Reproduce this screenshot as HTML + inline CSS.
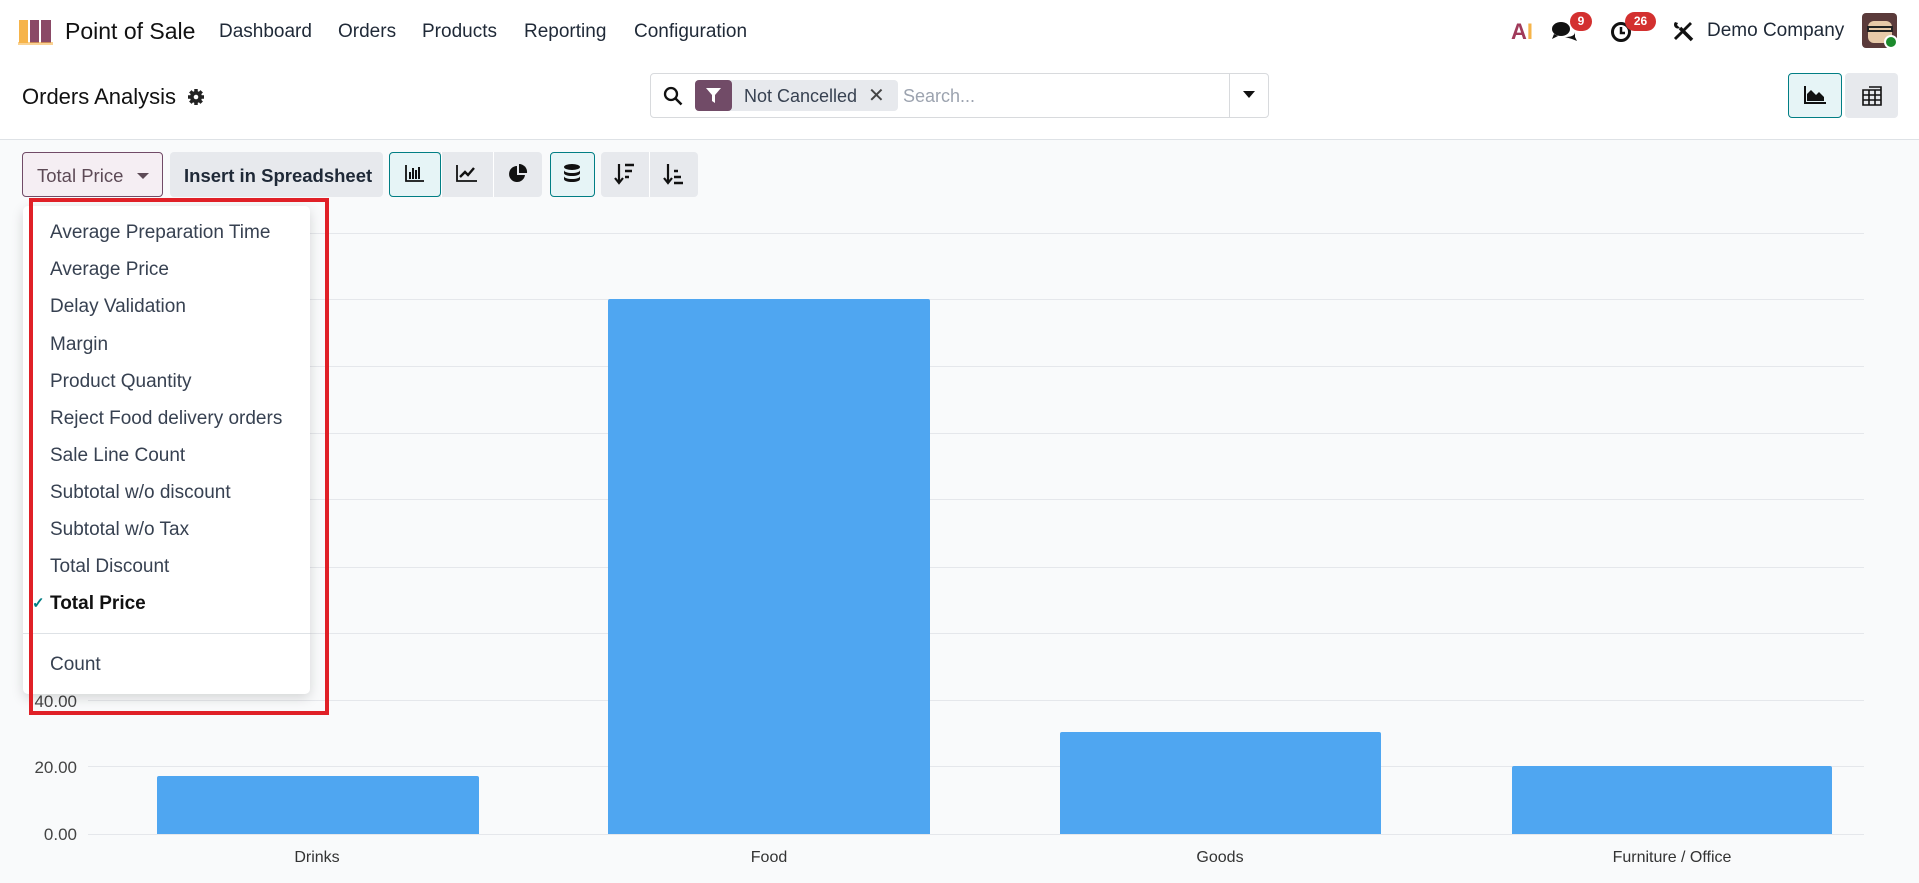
<!DOCTYPE html>
<html><head><meta charset="utf-8"><style>
*{box-sizing:border-box;margin:0;padding:0}
body{width:1919px;height:883px;overflow:hidden;background:#f9fafb;font-family:"Liberation Sans",Arial,sans-serif;color:#1f2937;position:relative}
.a{position:absolute}
.top{left:0;top:0;width:1919px;height:140px;background:#fff;border-bottom:1px solid #dee2e6}
.nav{top:21px;font-size:19px;color:#1f2937}
.btn{position:absolute;top:152px;height:45px;background:#e7e9ed;border-radius:4px}
.item{position:absolute;left:50px;font-size:19px;color:#374151}
.grid{position:absolute;left:88px;width:1776px;height:1px;background:#e5e7eb}
.bar{position:absolute;background:#4fa6f1;border-radius:2px 2px 0 0}
.yl{position:absolute;right:1842px;font-size:16px;color:#444}
.xl{position:absolute;top:849px;font-size:16px;color:#333;transform:translateX(-50%)}
.badge{position:absolute;background:#d3302f;color:#fff;font-size:12px;font-weight:bold;border-radius:10px;text-align:center;height:19px;line-height:19px}
</style></head><body>
<div class="a top"></div>
<svg class="a" style="left:17px;top:18px" width="37" height="27" viewBox="0 0 37 27"><path d="M2 2h9v23H2z" fill="#f6b44a"/><path d="M13 2h9v23h-9z" fill="#8a4966"/><path d="M24 2h10v23H24z" fill="#8a4966"/><path d="M1 24h35v3H1z" fill="#f6b44a" opacity=".6"/></svg>
<div class="a" style="left:65px;top:18px;font-size:23px;color:#111">Point of Sale</div>
<div class="a nav" style="left:219px">Dashboard</div>
<div class="a nav" style="left:338px">Orders</div>
<div class="a nav" style="left:422px">Products</div>
<div class="a nav" style="left:524px">Reporting</div>
<div class="a nav" style="left:634px">Configuration</div>
<div class="a" style="left:1511px;top:19px;font-size:22px;font-weight:bold"><span style="color:#a03a5a">A</span><span style="color:#f6b44a">I</span></div>
<svg class="a" style="left:1551px;top:20px" width="26" height="22" viewBox="0 0 26 22"><ellipse cx="10" cy="9" rx="9" ry="7" fill="#111"/><path d="M3 14l-2 5 6-3z" fill="#111"/><path d="M14 17c5 0 10-1 10-5v5l2 4-5-2z" fill="#111"/></svg>
<div class="badge" style="left:1570px;top:12px;width:22px">9</div>
<svg class="a" style="left:1610px;top:20px" width="24" height="24" viewBox="0 0 24 24"><circle cx="11" cy="12" r="8.5" fill="none" stroke="#111" stroke-width="3"/><path d="M11 7v6h4" stroke="#111" stroke-width="2.5" fill="none"/></svg>
<div class="badge" style="left:1625px;top:12px;width:31px">26</div>
<svg class="a" style="left:1672px;top:20px" width="22" height="22" viewBox="0 0 22 22"><path d="M8 8L20 20" stroke="#111" stroke-width="3.5"/><path d="M2 5a4 4 0 0 0 6 3l-3-3 1-2-3-1a4 4 0 0 0-1 3z" fill="#111"/><path d="M18 2l2 2-9 9-2-2z" fill="#111"/><path d="M9 12l-6 6 1 1 6-6z" fill="#111" stroke="#111" stroke-width="1.5"/></svg>
<div class="a" style="left:1707px;top:20px;font-size:19px;color:#1f2937">Demo Company</div>
<div class="a" style="left:1862px;top:13px;width:35px;height:35px;border-radius:4px;background:#5a3a3a"><div style="position:absolute;left:6px;top:8px;width:24px;height:22px;background:#e7c9a8;border-radius:6px"></div><div style="position:absolute;left:5px;top:13px;width:26px;height:6px;border:2px solid #222"></div></div>
<div class="a" style="left:1884px;top:35px;width:14px;height:14px;border-radius:50%;background:#1b8a2c;border:2px solid #fff"></div>
<div class="a" style="left:22px;top:84px;font-size:22px;color:#111">Orders Analysis</div>
<svg class="a" style="left:187px;top:88px" width="18" height="18" viewBox="0 0 18 18"><circle cx="9" cy="9" r="6" fill="#222"/><g stroke="#222" stroke-width="3.5"><path d="M9 1v16M1 9h16M3.3 3.3l11.4 11.4M14.7 3.3L3.3 14.7"/></g><circle cx="9" cy="9" r="2.3" fill="#fff"/></svg>
<div class="a" style="left:650px;top:73px;width:619px;height:45px;border:1px solid #d8dadd;border-radius:4px;background:#fff"></div>
<svg class="a" style="left:663px;top:86px" width="20" height="20" viewBox="0 0 20 20"><circle cx="8" cy="8" r="6" fill="none" stroke="#111" stroke-width="2.3"/><path d="M12.5 12.5l6 6" stroke="#111" stroke-width="2.5"/></svg>
<div class="a" style="left:695px;top:80px;width:203px;height:31px;background:#e7e9ed;border-radius:4px"></div>
<div class="a" style="left:695px;top:80px;width:37px;height:31px;background:#714b67;border-radius:4px"></div>
<svg class="a" style="left:705px;top:87px" width="17" height="17" viewBox="0 0 17 17"><path d="M1 1h15l-6 7v8l-3-2V8z" fill="#fff"/></svg>
<div class="a" style="left:744px;top:86px;font-size:18px;color:#374151">Not Cancelled</div>
<div class="a" style="left:868px;top:83px;font-size:20px;color:#444">✕</div>
<div class="a" style="left:903px;top:86px;font-size:18px;color:#9ca3af">Search...</div>
<div class="a" style="left:1229px;top:74px;width:1px;height:43px;background:#d8dadd"></div>
<div class="a" style="left:1243px;top:91px;border-left:6px solid transparent;border-right:6px solid transparent;border-top:7px solid #111"></div>
<div class="a" style="left:1788px;top:73px;width:54px;height:45px;background:#e6f4f6;border:1px solid #017e84;border-radius:4px"></div>
<svg class="a" style="left:1803px;top:85px" width="24" height="20" viewBox="0 0 24 20"><path d="M2 1v17h21" stroke="#111" stroke-width="2" fill="none"/><path d="M4 16V9l4-4 5 5 3-3 5 5v4z" fill="#111"/></svg>
<div class="a" style="left:1845px;top:73px;width:53px;height:45px;background:#e7e9ed;border-radius:4px"></div>
<svg class="a" style="left:1862px;top:86px" width="20" height="20" viewBox="0 0 20 20"><path d="M1 4h18v15H1zM1 9h18M1 14h18M7 4v15M13 4v15M7 1h12v3" stroke="#111" stroke-width="1.6" fill="none"/></svg>
<div class="btn" style="left:22px;width:141px;background:#f5eef3;border:1px solid #714b67"></div>
<div class="a" style="left:37px;top:165px;font-size:18.5px;color:#5d4a56">Total Price</div>
<div class="a" style="left:137px;top:173px;border-left:6px solid transparent;border-right:6px solid transparent;border-top:6px solid #5d4a56"></div>
<div class="btn" style="left:170px;width:213px"></div>
<div class="a" style="left:184px;top:165px;font-size:18.5px;font-weight:bold;color:#1f2937">Insert in Spreadsheet</div>
<div class="btn" style="left:389px;width:153px"></div>
<div class="btn" style="left:389px;width:52px;background:#e6f4f6;border:1px solid #017e84"></div>
<div class="a" style="left:441px;top:152px;width:1px;height:45px;background:#fff"></div>
<div class="a" style="left:493px;top:152px;width:1px;height:45px;background:#fff"></div>
<svg class="a" style="left:405px;top:164px" width="20" height="18" viewBox="0 0 20 18"><path d="M1 1v16h18" stroke="#111" stroke-width="1.8" fill="none"/><path d="M5 8v7M8 4v11M11 6v9M14 3v12" stroke="#111" stroke-width="2"/></svg>
<svg class="a" style="left:456px;top:164px" width="22" height="18" viewBox="0 0 22 18"><path d="M1 1v16h20" stroke="#111" stroke-width="1.8" fill="none"/><path d="M4 13l5-5 3 3 6-7" stroke="#111" stroke-width="2.4" fill="none"/></svg>
<svg class="a" style="left:508px;top:164px" width="20" height="20" viewBox="0 0 20 20"><path d="M9 2a8 8 0 1 0 8 9H9z" fill="#111"/><path d="M11 0v9h8a8 8 0 0 0-8-9z" fill="#111"/></svg>
<div class="btn" style="left:550px;width:45px;background:#e6f4f6;border:1px solid #017e84"></div>
<svg class="a" style="left:562px;top:163px" width="20" height="22" viewBox="0 0 20 22"><ellipse cx="10" cy="4" rx="8" ry="3" fill="#111"/><path d="M2 7c0 4 16 4 16 0v3c0 4-16 4-16 0zM2 13c0 4 16 4 16 0v3c0 4-16 4-16 0z" fill="#111"/></svg>
<div class="btn" style="left:601px;width:97px"></div>
<div class="a" style="left:649px;top:152px;width:1px;height:45px;background:#fff"></div>
<svg class="a" style="left:614px;top:163px" width="22" height="22" viewBox="0 0 22 22"><path d="M5 1v18M1 15l4 5 4-5" stroke="#111" stroke-width="2.2" fill="none"/><path d="M11 2h9M11 8h7M11 14h4" stroke="#111" stroke-width="2.5"/></svg>
<svg class="a" style="left:663px;top:163px" width="22" height="22" viewBox="0 0 22 22"><path d="M5 1v18M1 15l4 5 4-5" stroke="#111" stroke-width="2.2" fill="none"/><path d="M11 8h4M11 14h7M11 20h9" stroke="#111" stroke-width="2.5"/></svg>
<div class="grid" style="top:233px"></div><div class="grid" style="top:299px"></div><div class="grid" style="top:366px"></div><div class="grid" style="top:433px"></div><div class="grid" style="top:499px"></div><div class="grid" style="top:567px"></div><div class="grid" style="top:633px"></div><div class="grid" style="top:700px"></div><div class="grid" style="top:766px"></div><div class="grid" style="top:834px"></div>
<div class="yl" style="top:692px;font-size:17px">40.00</div>
<div class="yl" style="top:758px;font-size:17px">20.00</div>
<div class="yl" style="top:825px;font-size:17px">0.00</div>
<div class="bar" style="left:157px;width:322px;top:776px;height:58px"></div>
<div class="bar" style="left:608px;width:322px;top:299px;height:535px"></div>
<div class="bar" style="left:1060px;width:321px;top:732px;height:102px"></div>
<div class="bar" style="left:1512px;width:320px;top:766px;height:68px"></div>
<div class="xl" style="left:317px">Drinks</div>
<div class="xl" style="left:769px">Food</div>
<div class="xl" style="left:1220px">Goods</div>
<div class="xl" style="left:1672px">Furniture / Office</div>
<div class="a" style="left:23px;top:206px;width:287px;height:488px;background:#fff;border-radius:5px;box-shadow:0 4px 12px rgba(0,0,0,.15)"></div>
<div class="item" style="top:222px">Average Preparation Time</div>
<div class="item" style="top:259px">Average Price</div>
<div class="item" style="top:296px">Delay Validation</div>
<div class="item" style="top:334px">Margin</div>
<div class="item" style="top:371px">Product Quantity</div>
<div class="item" style="top:408px">Reject Food delivery orders</div>
<div class="item" style="top:445px">Sale Line Count</div>
<div class="item" style="top:482px">Subtotal w/o discount</div>
<div class="item" style="top:519px">Subtotal w/o Tax</div>
<div class="item" style="top:556px">Total Discount</div>
<div class="item" style="top:593px;font-weight:bold;color:#111">Total Price</div>
<div class="a" style="left:32px;top:594px;font-size:15px;color:#017e84;font-weight:bold">✓</div>
<div class="a" style="left:23px;top:633px;width:287px;height:1px;background:#dee2e6"></div>
<div class="item" style="top:654px">Count</div>
<div class="a" style="left:29px;top:198px;width:300px;height:517px;border:4px solid #e02027"></div>
</body></html>
